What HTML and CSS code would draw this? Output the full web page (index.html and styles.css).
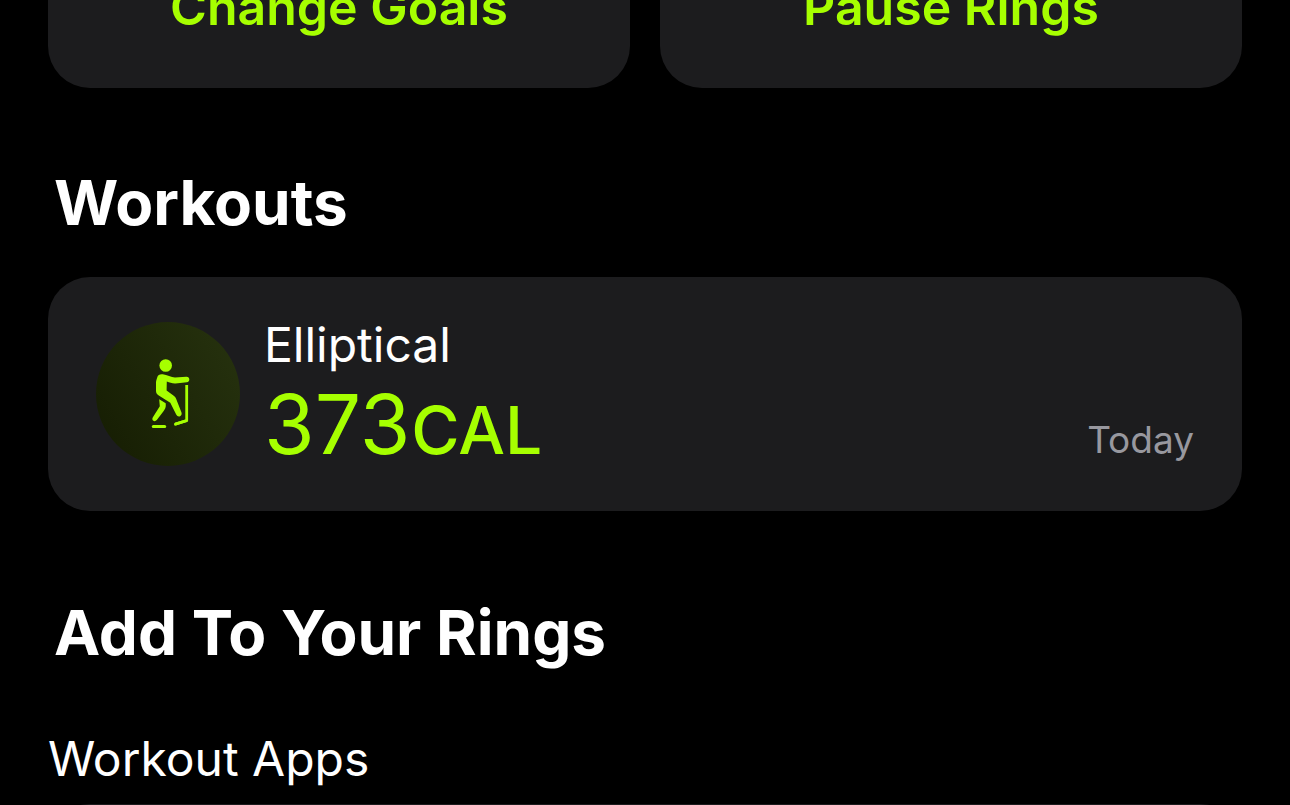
FILE: index.html
```html
<!DOCTYPE html>
<html lang="en">
<head>
<meta charset="utf-8">
<meta name="viewport" content="width=device-width, initial-scale=1">
<title>Summary</title>
<link rel="stylesheet" href="styles.css">
</head>
<body>
<main class="page">
  <div class="actions">
    <button class="action" type="button">Change Goals</button>
    <button class="action" type="button">Pause Rings</button>
  </div>

  <section class="workouts">
    <h2 class="heading">Workouts</h2>
    <article class="card">
      <div class="badge">
        <svg class="icon" viewBox="-2 1 60 85" aria-hidden="true" fill="none" stroke="currentColor" stroke-linecap="round" stroke-linejoin="round">
          <circle cx="25.7" cy="14.5" r="6.3" fill="currentColor" stroke="none"/>
          <path d="M17.2 26.4C17.8 23.7 20.2 22.9 22.8 23.3C27 24 31.2 26.4 35 26.4L46.3 25.7C50.2 25.5 50.4 30.8 46.8 31.2L35.5 32.6C32.2 32.8 29.6 31.4 26.8 30.6L26.6 39.6L33.4 44.4C34.7 45.3 35.3 46 36 47.5L41.4 61.2C42.8 65.1 38 67.1 36.2 63.6L30.3 51.8L18.4 44.2C16.6 43 16 41.6 16 39.5V31.5C16 29.5 16.7 28 17.2 26.4Z" fill="currentColor" stroke="none"/>
          <path d="M19.2 48.2L25.7 52.3C26 56.2 25.6 57.3 23.5 60.2L16.8 69C14.7 71.6 11 69.3 12.9 66.2L19.8 55.2Z" fill="currentColor" stroke="none"/>
          <path d="M13.3 75.6H24.7" stroke-width="3"/>
          <path d="M46.7 34V69.6L35.3 73.2" stroke-width="2.8" stroke-linecap="butt"/>
          <path d="M35.4 73.2L46.7 69.5" stroke-width="2.8"/>
        </svg>
      </div>
      <div class="details">
        <h3 class="name">Elliptical</h3>
        <p class="value">373<span class="unit">CAL</span></p>
      </div>
      <time class="day">Today</time>
    </article>
  </section>

  <section class="apps">
    <h2 class="heading">Add To Your Rings</h2>
    <h3 class="subheading">Workout Apps</h3>
    <div class="panel"></div>
  </section>
</main>
</body>
</html>
```
FILE: styles.css
```css
* { box-sizing: border-box; }

html { background: #000; overflow: hidden; }

body {
  margin: 0;
  background: #000;
  color: #fff;
  font-family: Inter, "Liberation Sans", sans-serif;
}

h2, h3, p { margin: 0; }

.page {
  display: flex;
  flex-direction: column;
  padding: 0 48px;
}

/* The row is scrolled part of the way out of view. */
.actions {
  display: grid;
  grid-template-columns: 1fr 1fr;
  gap: 30px;
  margin-top: -74px;
}

.action {
  padding: 51px 24px;
  border: 0;
  border-radius: 42px;
  background: #1c1c1e;
  color: #a6ff00;
  font: 600 50px/60px Inter, "Liberation Sans", sans-serif;
}

.workouts { margin-top: 75px; }

.heading {
  padding: 0 6px;
  font-size: 62px;
  font-weight: 700;
  line-height: 80px;
}

.card {
  display: flex;
  align-items: center;
  gap: 24px;
  margin-top: 34px;
  padding: 38px 48px;
  border-radius: 42px;
  background: #1c1c1e;
}

.badge {
  display: flex;
  align-items: center;
  justify-content: center;
  flex: none;
  width: 144px;
  height: 144px;
  border-radius: 50%;
  background: linear-gradient(60deg, #151c02, #27330f);
  color: #a6ff00;
}

.icon { width: 60px; height: 85px; }

.details { flex: 1; }

.name {
  font-size: 48px;
  font-weight: 400;
  line-height: 60px;
}

.value {
  margin-top: 2px;
  color: #a6ff00;
  font-size: 82px;
  font-weight: 400;
  line-height: 96px;
}

.unit {
  margin-left: 1px;
  font-size: 66px;
  font-weight: 500;
  line-height: 1;
}

.day {
  align-self: flex-end;
  padding-bottom: 9px;
  color: #98989f;
  font-size: 37px;
  line-height: 48px;
}

.apps { margin-top: 82px; }

.subheading {
  margin-top: 56px;
  font-size: 48px;
  font-weight: 400;
  line-height: 60px;
}

.panel {
  height: 234px;
  margin-top: 15px;
  border-radius: 42px;
  background: #1c1c1e;
}
```
